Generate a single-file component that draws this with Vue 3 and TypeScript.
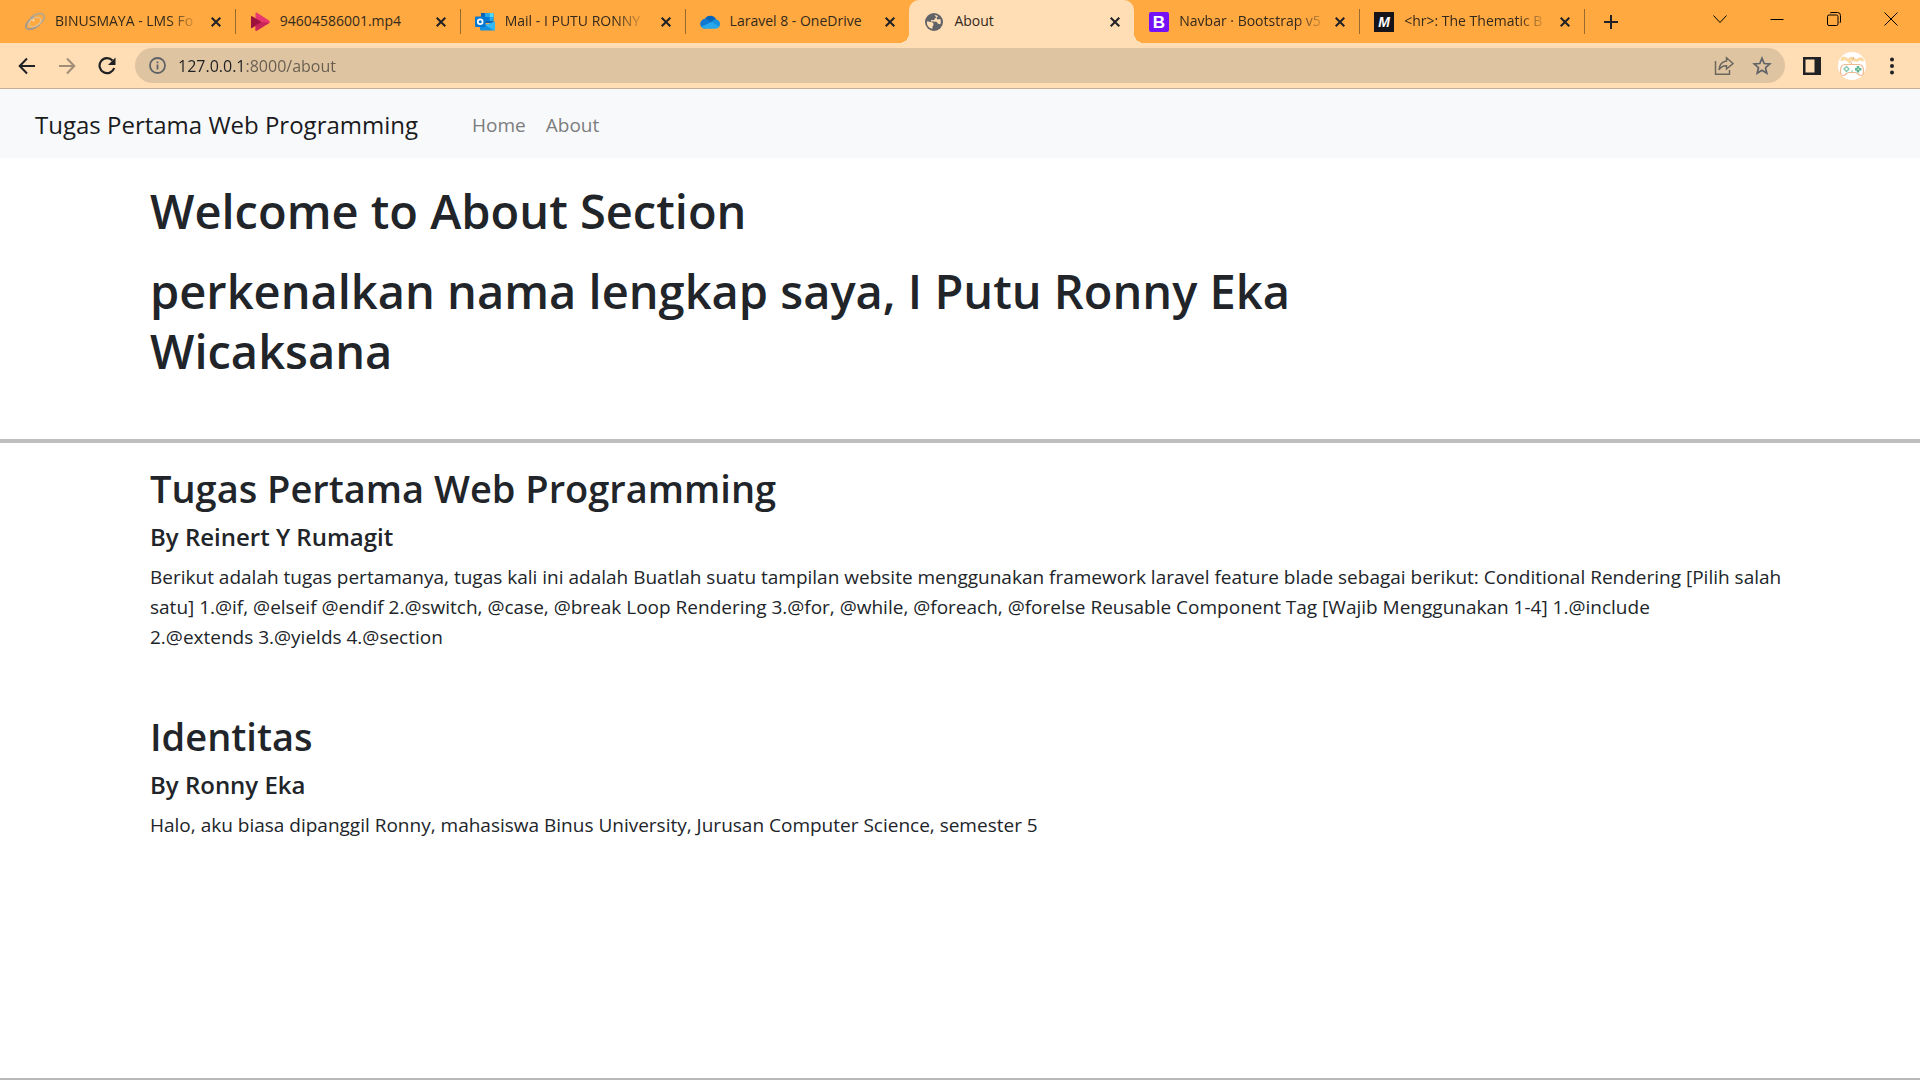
<script setup lang="ts">
import { ref } from 'vue'

interface Tab {
  icon: string
  title: string
  faded?: boolean
}

interface Article {
  title: string
  author: string
  body: string
}

const tabs: Tab[] = [
  { icon: 'binus', title: 'BINUSMAYA - LMS Fo', faded: true },
  { icon: 'stream', title: '94604586001.mp4' },
  { icon: 'outlook', title: 'Mail - I PUTU RONNY', faded: true },
  { icon: 'onedrive', title: 'Laravel 8 - OneDrive' },
  { icon: 'globe', title: 'About' },
  { icon: 'bootstrap', title: 'Navbar · Bootstrap v5', faded: true },
  { icon: 'mdn', title: '<hr>: The Thematic B', faded: true },
]

const activeTab = 4
const address = ref('127.0.0.1:8000/about')

const articles: Article[] = [
  {
    title: 'Tugas Pertama Web Programming',
    author: 'By Reinert Y Rumagit',
    body: 'Berikut adalah tugas pertamanya, tugas kali ini adalah Buatlah suatu tampilan website menggunakan framework laravel feature blade sebagai berikut: Conditional Rendering [Pilih salah satu] 1.@if, @elseif @endif 2.@switch, @case, @break Loop Rendering 3.@for, @while, @foreach, @forelse Reusable Component Tag [Wajib Menggunakan 1-4] 1.@include\n2.@extends 3.@yields 4.@section',
  },
  {
    title: 'Identitas',
    author: 'By Ronny Eka',
    body: 'Halo, aku biasa dipanggil Ronny, mahasiswa Binus University, Jurusan Computer Science, semester 5',
  },
]
</script>

<template>
  <div class="window">
    <header class="chrome">
      <div class="tabstrip">
        <div class="tabs">
          <div
            v-for="(tab, i) in tabs"
            :key="tab.title"
            class="tab"
            :class="{ active: i === activeTab, divided: i !== activeTab && i !== activeTab - 1 }"
          >
            <button class="tab-main" type="button">
              <svg v-if="tab.icon === 'binus'" class="favicon" viewBox="0 0 20 20">
                <g fill="none" stroke-linecap="round">
                  <path d="M6 5.500C11 1 18 .5 19 3.500C20 6 18 9 15 11.500" stroke="#b9a58c" stroke-width="1.800" />
                  <path d="M14 13C9 17.500 2 18.500 1 15.500C.3 12.500 4 7.500 9 5.500" stroke="#a69a8c" stroke-width="2" />
                  <ellipse cx="10" cy="10" rx="6.500" ry="4" transform="rotate(-30 10 10)" stroke="#dfc49c" stroke-width="1.200" />
                </g>
                <circle cx="8.500" cy="8.500" r="1" fill="#ffe7c4" />
              </svg>
              <svg v-else-if="tab.icon === 'stream'" class="favicon" viewBox="0 0 20 20">
                <path d="M5.500 1.500Q5.500 0 7 .7L19 8.500Q20.500 10 19 11.200L7 18.500Q5.500 19.300 5.500 17.800Z" fill="#e8366f" />
                <path d="M5.500 14V18.300Q5.500 19.300 7 18.500L19.500 10.600 10.500 10Z" fill="#c92557" />
                <path d="M1 4.500Q1 3.800 2 4.200L10.500 9.300Q11.200 10 10.500 10.600L2 16Q1 16.400 1 15.600Z" fill="#9d123c" />
              </svg>
              <svg v-else-if="tab.icon === 'outlook'" class="favicon" viewBox="0 0 20 20">
                <path d="M6 1H18.500V11H6Z" fill="#0a64b4" />
                <path d="M10 1H14.500V5H10Z" fill="#28a8ea" />
                <path d="M14.500 1H18.500V5H14.500Z" fill="#50d9ff" />
                <path d="M10 5H14.500V9H10Z" fill="#0078d4" />
                <path d="M14.500 5H18.500V9H14.500Z" fill="#28a8ea" />
                <path d="M5 9.500 12.500 13.500 20 9.500V17.500Q20 18.500 19 18.500H6Q5 18.500 5 17.500Z" fill="#1490df" />
                <path d="M20 9.500V17.500Q20 18.500 19 18.500L10 13Z" fill="#35b8f1" />
                <rect y="4.500" width="10.500" height="10.500" rx="1" fill="#0078d4" />
                <circle cx="5.200" cy="9.800" r="2.400" fill="none" stroke="#fff" stroke-width="1.700" />
              </svg>
              <svg v-else-if="tab.icon === 'onedrive'" class="favicon" viewBox="0 0 20 20">
                <path d="M4.800 7.200A6.200 6.200 0 0 1 16 7.500L12 12Z" fill="#0364b8" />
                <path d="M1 14.500A5 5 0 0 1 7 7.200L13 11 5 16.500H4Q2 16.200 1 14.500Z" fill="#0f78d0" />
                <path d="M11.500 10A5 5 0 0 1 17 7.800Q20 9 20 12 20 14.500 18.500 15.500Z" fill="#1490df" />
                <path d="M1.200 14.800 12 9.800 19.300 14.600Q18.300 16.700 16 16.700H4.500Q2.300 16.600 1.200 14.800Z" fill="#28a8ea" />
              </svg>
              <svg v-else-if="tab.icon === 'globe'" class="favicon" viewBox="0 0 20 20">
                <circle cx="10" cy="10" r="9" fill="#5f6368" />
                <path d="M3 9.200 8 10.300Q10 11 9.500 13L8.500 14.500V16.800Q4 16 3 12Z" fill="#ffddb5" />
                <path d="M10.500 2.800 14 4Q13.500 6 11 6.200L10 8.200 7 8V9.500L12.500 9.800 14 11.800 16.500 12.200Q17.500 9 16.300 7L13.500 7.500 12.500 6Z" fill="#ffddb5" />
              </svg>
              <svg v-else-if="tab.icon === 'bootstrap'" class="favicon" viewBox="0 0 20 20">
                <rect width="20" height="20" rx="2" fill="#7412f5" />
                <text x="10" y="16" text-anchor="middle" class="glyph-b">B</text>
              </svg>
              <svg v-else class="favicon" viewBox="0 0 20 20">
                <rect width="20" height="20" fill="#15141a" />
                <text x="10" y="15" text-anchor="middle" class="glyph-m">M</text>
              </svg>
              <span class="tab-title" :class="{ faded: tab.faded }">{{ tab.title }}</span>
            </button>
            <button class="tab-close" type="button" :aria-label="'Close ' + tab.title">
              <svg width="10" height="10" viewBox="0 0 10 10"><path d="M.7.7 9.300 9.300M9.300.7.7 9.300" stroke="#202124" stroke-width="2" /></svg>
            </button>
          </div>
        </div>
        <button class="new-tab" type="button" aria-label="New tab">
          <svg width="14" height="14" viewBox="0 0 14 14"><path d="M7 0V14M0 7H14" stroke="#202124" stroke-width="2" /></svg>
        </button>
        <div class="window-controls">
          <button type="button" aria-label="Search tabs">
            <svg width="14" height="14" viewBox="0 0 14 14"><path d="M.5 3.500 7 10.500 13.500 3.500" /></svg>
          </button>
          <button type="button" aria-label="Minimize">
            <svg width="14" height="14" viewBox="0 0 14 14"><path d="M.5 7.500H13.500" /></svg>
          </button>
          <button type="button" aria-label="Restore">
            <svg width="14" height="14" viewBox="0 0 14 14">
              <rect x=".5" y="3" width="10.500" height="10.500" rx="1.500" />
              <path d="M3 1Q3.500.5 5 .5H10.500Q13.500.5 13.500 3.500V9Q13.500 10.500 12.800 11" />
            </svg>
          </button>
          <button type="button" aria-label="Close">
            <svg width="14" height="14" viewBox="0 0 14 14"><path d="M.5.5 13.500 13.500M13.500.5.5 13.500" /></svg>
          </button>
        </div>
      </div>

      <div class="toolbar">
        <button class="tool" type="button" aria-label="Back">
          <svg width="18" height="18" viewBox="0 0 18 18"><path d="M17 9H2M9 1.500 1.700 9 9 16.500" fill="none" stroke="#202124" stroke-width="2" /></svg>
        </button>
        <button class="tool" type="button" aria-label="Forward">
          <svg width="18" height="18" viewBox="0 0 18 18"><path d="M1 9H16M9 1.500 16.300 9 9 16.500" fill="none" stroke="#a18e78" stroke-width="2" /></svg>
        </button>
        <button class="tool" type="button" aria-label="Reload">
          <svg width="18" height="18" viewBox="0 0 18 18">
            <path d="M14.500 3.500A7.500 7.500 0 1 0 16.200 11" fill="none" stroke="#202124" stroke-width="2.200" />
            <path d="M17.500.5V8H10Z" fill="#202124" />
          </svg>
        </button>
        <div class="omnibox">
          <svg width="17" height="17" viewBox="0 0 17 17">
            <circle cx="8.500" cy="8.500" r="7.500" fill="none" stroke="#5f6368" stroke-width="1.800" />
            <path d="M8.500 7.500V12.500M8.500 4.500V6.300" stroke="#5f6368" stroke-width="1.800" />
          </svg>
          <input v-model="address" class="address" type="text" aria-label="Address" spellcheck="false" />
          <button class="omni-btn" type="button" aria-label="Share">
            <svg width="20" height="20" viewBox="0 0 20 20" fill="none" stroke="#6b675f" stroke-width="1.500">
              <path d="M1.500 5V18.200H15.500V14" />
              <path d="M12.500 1.800 19 7.500 12.500 13V9.800Q7.500 9.500 5 14 5.500 6 12.500 5Z" />
            </svg>
          </button>
          <button class="omni-btn" type="button" aria-label="Bookmark">
            <svg width="20" height="20" viewBox="0 0 20 20" fill="none" stroke="#5f6368" stroke-width="1.700">
              <path d="M10 2.300 12.200 7.500 17.800 8 13.500 11.700 14.800 17.200 10 14.300 5.200 17.200 6.500 11.700 2.200 8 7.800 7.500Z" />
            </svg>
          </button>
        </div>
        <button class="tool" type="button" aria-label="Side panel">
          <svg width="18" height="18" viewBox="0 0 18 18">
            <path d="M0 0H18V18H0Z" fill="#202124" />
            <path d="M2.500 2.500H11.500V15.500H2.500Z" fill="#ffddb5" />
          </svg>
        </button>
        <button class="tool" type="button" aria-label="Profile">
          <svg width="28" height="28" viewBox="0 0 28 28">
            <circle cx="14" cy="14" r="14" fill="#fff" />
            <path d="M4 9Q4 5 7 6.500T11 9Q12 5 15 7T20 8Q23 5 25 9" fill="none" stroke="#fbd9a0" stroke-width="3" />
            <path d="M14 12Q11 10 14 8.500T15 5" fill="none" stroke="#e8b27c" stroke-width="1" />
            <path d="M7 12.500H21Q25 12.500 25.500 18 26 23.500 23 23.500C20 23.500 20 20.500 17 20.500H11C8 20.500 8 23.500 5 23.500Q2 23.500 2.500 18 3 12.500 7 12.500Z" fill="#fff" stroke="#eeb890" stroke-width="1.200" />
            <path d="M8.500 14.500 11 17 8.500 19.500 6 17Z" fill="none" stroke="#86c9ad" stroke-width="1.400" />
            <path d="M20 14V20.500M17 17.200H23.500" stroke="#5fb592" stroke-width="2.600" stroke-dasharray="2.600 1.200" />
            <circle cx="14" cy="19" r="1" fill="#b0d8c5" />
          </svg>
        </button>
        <button class="tool" type="button" aria-label="Menu">
          <svg width="18" height="18" viewBox="0 0 18 18" fill="#202124">
            <circle cx="9" cy="2.500" r="2" /><circle cx="9" cy="9" r="2" /><circle cx="9" cy="15.500" r="2" />
          </svg>
        </button>
      </div>
    </header>

    <nav class="navbar">
      <a class="brand" href="#">Tugas Pertama Web Programming</a>
      <a class="nav-link" href="#">Home</a>
      <a class="nav-link" href="#">About</a>
    </nav>

    <main class="page">
      <section class="intro">
        <h1>Welcome to About Section</h1>
        <h1>perkenalkan nama lengkap saya, I Putu Ronny Eka Wicaksana</h1>
      </section>
      <hr class="rule" />
      <article v-for="item in articles" :key="item.title" class="article">
        <h2>{{ item.title }}</h2>
        <h3>{{ item.author }}</h3>
        <p>{{ item.body }}</p>
      </article>
    </main>
    <hr class="bottom-rule" />
  </div>
</template>

<style>
body {
  margin: 0;
  background: #fff;
}
</style>

<style scoped>
.window {
  display: flex;
  flex-direction: column;
  min-height: 100vh;
  font-family: 'Open Sans', 'Noto Sans', sans-serif;
  color: #212529;
}

button {
  display: flex;
  align-items: center;
  justify-content: center;
  padding: 0;
  border: 0;
  background: none;
  font: inherit;
  color: inherit;
}

svg {
  display: block;
  flex: none;
}

.tabstrip {
  display: flex;
  height: 43px;
  padding-left: 10px;
  background: #ffa940;
}

.tabs {
  display: flex;
  flex: 0 1 1574px;
  min-width: 0;
}

.tab {
  position: relative;
  display: flex;
  flex: 1 1 0;
  min-width: 0;
  align-items: center;
  padding: 0 12px 0 15px;
}

.tab.divided::after {
  content: '';
  position: absolute;
  right: -1px;
  top: 9px;
  width: 1px;
  height: 25px;
  background: #99692e;
}

.tab.active {
  border-radius: 10px 10px 0 0;
  background: #ffddb5;
}

.tab.active::before,
.tab.active::after {
  content: '';
  position: absolute;
  bottom: 0;
  width: 10px;
  height: 10px;
}

.tab.active::before {
  right: 100%;
  background: radial-gradient(circle at 0 0, #ffa940 10px, #ffddb5 10px);
}

.tab.active::after {
  left: 100%;
  background: radial-gradient(circle at 100% 0, #ffa940 10px, #ffddb5 10px);
}

.tab-main {
  flex: 1;
  min-width: 0;
  gap: 10px;
  height: 42px;
  justify-content: flex-start;
}

.favicon {
  width: 20px;
  height: 20px;
}

.glyph-b {
  font: 700 17px 'Liberation Sans', sans-serif;
  fill: #fff;
}

.glyph-m {
  font: italic 700 14px 'Liberation Sans', sans-serif;
  fill: #fff;
}

.tab-title {
  padding-bottom: 2px;
  font-size: 14px;
  line-height: 20px;
  white-space: nowrap;
  color: #33291c;
}

.tab-title.faded {
  mask-image: linear-gradient(to right, #000 calc(100% - 24px), rgba(0, 0, 0, 0.2));
}

.tab-close {
  width: 14px;
  height: 42px;
}

.new-tab {
  width: 54px;
}

.window-controls {
  display: flex;
  margin-left: auto;
  padding-right: 1px;
}

.window-controls button {
  width: 57px;
  height: 37px;
}

.window-controls svg {
  fill: none;
  stroke: #000;
  stroke-width: 1;
}

.toolbar {
  display: flex;
  align-items: center;
  height: 45px;
  padding: 0 8px 0 7px;
  border-bottom: 1px solid #c4ae94;
  background: #ffddb5;
}

.tool {
  width: 40px;
  height: 40px;
}

.omnibox {
  display: flex;
  flex: 1;
  align-items: center;
  box-sizing: border-box;
  height: 35px;
  margin: 0 7px 0 8px;
  padding: 0 4px 0 14px;
  border-radius: 18px;
  background: #dfc4a1;
}

.address {
  flex: 1;
  min-width: 0;
  padding: 0;
  margin-left: 12px;
  border: 0;
  outline: 0;
  font: 16px/24px 'Open Sans', 'Noto Sans', sans-serif;
  color: transparent;
  background: linear-gradient(to right, #202124 67px, #665d50 67px);
  background-clip: text;
}

.omni-btn {
  width: 38px;
  height: 34px;
}

.navbar {
  display: flex;
  align-items: center;
  box-sizing: border-box;
  height: 69px;
  padding: 2px 25px 0 35px;
  background: #f8f9fb;
}

.navbar a {
  text-decoration: none;
}

.brand {
  margin-right: 44px;
  font-size: 24px;
  line-height: 36px;
  color: #1a1b1d;
}

.nav-link {
  padding: 0 10px;
  font-size: 19px;
  line-height: 30px;
  color: #7c7d7e;
}

.page {
  flex: 1;
}

h1,
h2,
h3,
p {
  margin: 0;
}

h1,
h2,
h3 {
  font-weight: 600;
}

.intro {
  max-width: 1200px;
  padding: 23px 150px 58px;
}

h1 {
  margin-bottom: 20px;
  font-size: 47px;
  line-height: 60px;
}

h1:last-child {
  margin-bottom: 0;
}

.rule {
  height: 4px;
  margin: 0;
  border: 0;
  background: #bfbfbf;
}

.article {
  padding: 21px 136px 0 150px;
}

.article + .article {
  padding-top: 60px;
}

h2 {
  margin-bottom: 10px;
  font-size: 38px;
  line-height: 48px;
}

h3 {
  margin-bottom: 10px;
  font-size: 24px;
  line-height: 30px;
}

p {
  font-size: 19px;
  line-height: 30px;
  white-space: pre-line;
}

.bottom-rule {
  width: 100%;
  height: 2px;
  margin: 0;
  border: 0;
  background: #b8b8b8;
}
</style>
